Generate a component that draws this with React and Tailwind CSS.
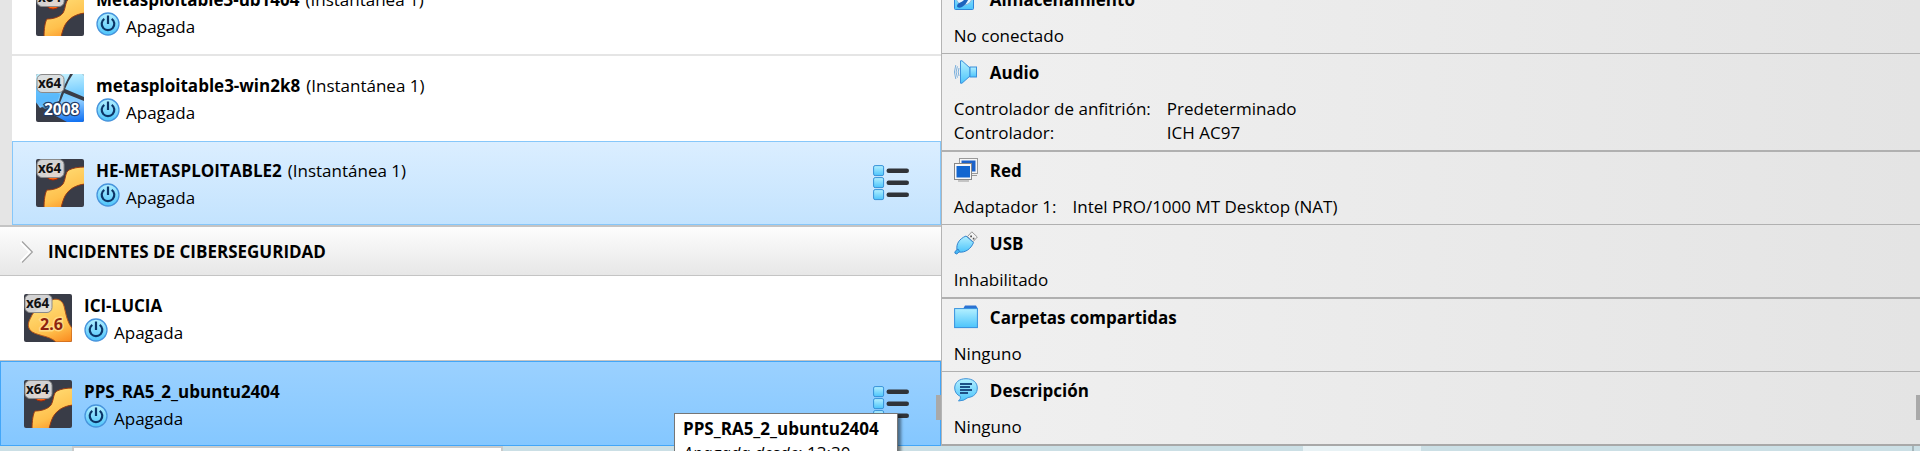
import { useId } from "react";

function Badge() {
  return (
    <g>
      <rect x="1" y="0.5" width="27" height="18" rx="5" fill="#dedede" fillOpacity="0.93" stroke="#8a8a8a" />
      <text x="2" y="14.3" fontSize="13.5" fontWeight="700" fill="#111" fontFamily="Noto Sans, sans-serif">x64</text>
    </g>
  );
}

function OsIcon({ kind }) {
  const id = useId();
  const g = `url(#${id})`;
  return (
    <svg className="size-12 shrink-0 rounded-xs" viewBox="0 0 48 48" role="img" aria-label={kind}>
      <defs>
        {kind === "windows" ? (
          <linearGradient id={id} gradientUnits="userSpaceOnUse" x1="28" y1="0" x2="34" y2="48">
            <stop offset="0" stopColor="#c0f0ff" />
            <stop offset="0.45" stopColor="#74cbff" />
            <stop offset="0.6" stopColor="#8ccbff" />
            <stop offset="1" stopColor="#1473f2" />
          </linearGradient>
        ) : (
          <linearGradient id={id} gradientUnits="userSpaceOnUse" x1="20" y1="6" x2="40" y2="54">
            <stop offset="0" stopColor="#ffe07a" />
            <stop offset="0.6" stopColor="#ffc04c" />
            <stop offset="1" stopColor="#f97f16" />
          </linearGradient>
        )}
      </defs>
      <rect width="48" height="48" fill="#393c47" />
      {kind === "ubuntu" && (
        <>
          <circle cx="17" cy="13" r="8" fill="#ff6a13" stroke="#a52a08" />
          <path d="M8 49C8 41 9 34 11 31C17 31 24 29 27 25C30 20 29 13 33 11C37 9 42 8 49 8V25C40 26 33 30 29 37C27 41 26 45 25 49Z" fill={g} stroke="#9a3b12" />
        </>
      )}
      {kind === "windows" && (
        <>
          <path d="M0 0H34C31 7 27 12 23 27C16 30 8 32 4 34L0 28Z" fill={g} />
          <path d="M37 0H48V23L29 15Q32 7 37 0Z" fill={g} />
          <path d="M28 19L48 27V48H31L18 41Q24 30 28 19Z" fill={g} />
          <path d="M0 12L24 20L20 31L9 35L0 29Z" fill="#46adfa" fillOpacity="0.6" />
          <text x="8" y="40.5" fontSize="15.5" fontWeight="700" fill="#fff" stroke="#243b63" strokeWidth="2.4" paintOrder="stroke" fontFamily="Noto Sans, sans-serif">2008</text>
        </>
      )}
      {kind === "linux" && (
        <>
          <path d="M24 9C29 3 38 4 40 12C42 20 43 28 48 34V48H32C25 41 11 42 6 36C2 30 6 26 8 21C12 14 18 14 24 9Z" fill={g} stroke="#b5561b" />
          <text x="16" y="36" fontSize="16" fontWeight="700" fill="#8d2410" stroke="#ffdb83" strokeWidth="3" paintOrder="stroke" fontFamily="Noto Sans, sans-serif">2.6</text>
        </>
      )}
      <Badge />
    </svg>
  );
}

function BlueGradient({ id }) {
  return (
    <defs>
      <linearGradient id={id} x1="0" y1="0" x2="0" y2="1">
        <stop offset="0" stopColor="#b4f0ff" />
        <stop offset="1" stopColor="#4cc4fb" />
      </linearGradient>
    </defs>
  );
}

function PowerIcon() {
  const id = useId();
  return (
    <svg className="size-6 shrink-0" viewBox="0 0 24 24" aria-hidden="true">
      <BlueGradient id={id} />
      <circle cx="12" cy="12" r="11" fill={`url(#${id})`} stroke="#4794dc" strokeWidth="1.3" />
      <path d="M8.3 6.8A6.3 6.3 0 1 0 15.7 6.8M12 3.5V12" fill="none" stroke="#0c3567" strokeWidth="2.2" />
    </svg>
  );
}

function ListIcon() {
  const id = useId();
  return (
    <svg className="h-9 w-9" viewBox="0 0 36 36" aria-hidden="true">
      <BlueGradient id={id} />
      {[0, 12, 24].map((y) => (
        <g key={y}>
          <rect x="0.6" y={y + 0.6} width="10" height="10" rx="1.5" fill={`url(#${id})`} stroke="#3691d8" />
          <rect x="13.5" y={y + 3.5} width="22.5" height="4.5" rx="2.2" fill="#303338" />
        </g>
      ))}
    </svg>
  );
}

function SectionIcon({ kind }) {
  const id = useId();
  const g = `url(#${id})`;
  return (
    <svg className="size-6 shrink-0" viewBox="0 0 24 24" aria-hidden="true">
      <BlueGradient id={id} />
      {kind === "disk" && (
        <>
          <rect x="0.5" y="0.5" width="19" height="22" rx="1" fill={g} stroke="#2f86da" />
          <circle cx="10" cy="10" r="8" fill="#e9f7ff" stroke="#8fb8d8" />
          <path d="M3 19C4 15 7 16 10 13L16 6C15 12 13 17 8 20C6 21 3 21 3 19Z" fill="#1d63bd" />
        </>
      )}
      {kind === "audio" && (
        <>
          <path d="M5 8Q3.4 12 5 16M3.4 6.3Q0.8 12 3.4 17.7M1.8 5Q-1 12 1.8 19" fill="none" stroke="#7db1dd" />
          <path d="M6.5 0.8H8L16 8V16L8 23.2H6.5Z" fill={g} stroke="#3a8fdb" />
          <rect x="16" y="7" width="6.5" height="10" fill={g} stroke="#3a8fdb" />
        </>
      )}
      {kind === "network" && (
        <>
          <rect x="5.5" y="0.5" width="18" height="15" fill="#f6f6f6" stroke="#999" />
          <rect x="7.5" y="2.5" width="14" height="11" fill="#1c62c9" />
          <path d="M9 17.5H23" stroke="#999" />
          <rect x="0.5" y="5.5" width="17" height="16" fill="#f8f8f8" stroke="#888" />
          <rect x="2.5" y="8" width="13.5" height="11.5" fill="#1266d0" />
          <path d="M4 23H15" stroke="#999" />
        </>
      )}
      {kind === "usb" && (
        <>
          <path d="M13.5 5.5L17.8 0.8L23.3 6L19 10.8Z" fill="#f3f3f3" stroke="#999" />
          <path d="M16.2 4.5H18V6.2H16.2ZM18.8 6.8H20.4V8.4H18.8Z" fill="#555" />
          <path d="M3 19C2 13 5 8 12 5L19.5 11.5C17 18 11 22 5 21Z" fill={g} stroke="#3284cf" />
          <path d="M4 18L1 20.5Q0 22.5 2.8 23L5.5 20.5Z" fill="#48b9f4" stroke="#3284cf" />
        </>
      )}
      {kind === "folder" && (
        <>
          <path d="M9 4L11 0.5H22L23.5 3V6H9Z" fill="#2b72d2" />
          <rect x="0.6" y="3.6" width="22.8" height="19" fill={g} stroke="#3591de" />
        </>
      )}
      {kind === "comment" && (
        <>
          <path d="M12 0.7C5 0.7 0.7 4.5 0.7 10C0.7 14 3 17 6.5 18.5Q7 21 4.5 23Q10 23 14 19.5C20 19 23.3 15 23.3 10C23.3 4.5 19 0.7 12 0.7Z" fill={g} stroke="#3e92d8" />
          <path d="M6 6H18M6 9H16M6 12H18M6 15H14" stroke="#1d4f86" strokeWidth="1.8" />
        </>
      )}
    </svg>
  );
}

function Machine({ os, name, snapshot, className, menu }) {
  return (
    <li className={`flex shrink-0 items-start gap-3 pr-8 pl-6 ${className}`}>
      <OsIcon kind={os} />
      <div className="min-w-0 grow">
        <p className="leading-6 whitespace-nowrap">
          <strong>{name}</strong>
          {snapshot && <span className="ml-[6px]">{snapshot}</span>}
        </p>
        <p className="flex items-start gap-[6px]">
          <PowerIcon />
          <span className="pt-[3px] leading-6">Apagada</span>
        </p>
      </div>
      {menu && (
        <button type="button" aria-label={`Herramientas de ${name}`} className="mt-[6px]">
          <ListIcon />
        </button>
      )}
    </li>
  );
}

function Section({ icon, title, rows, className }) {
  return (
    <section className={`pt-[6px] pb-[5px] pl-3 ${className}`}>
      <h2 className="flex h-6 items-start gap-3 font-bold">
        <SectionIcon kind={icon} />
        <span className="pt-px leading-6">{title}</span>
      </h2>
      <table className="mt-[13px]">
        <tbody>
          {rows.map(([label, value]) => (
            <tr key={label} className="leading-6">
              <td className="p-0 pr-4">{label}</td>
              {value && <td className="p-0">{value}</td>}
            </tr>
          ))}
        </tbody>
      </table>
    </section>
  );
}

export default function App() {
  return (
    <div className="relative overflow-hidden bg-[#cbdfe5] font-['Open_Sans',sans-serif] text-[17px] text-black">
      <main className="grid grid-cols-[49fr_51fr]">
        <div className="relative bg-white">
          <ul className="-mt-[30px] border-l-12 border-[#e5e5e5] bg-white">
            <Machine os="ubuntu" name="Metasploitable3-ub1404" snapshot="(Instantánea 1)" className="h-[84px] pt-[18px]" />
            <Machine os="windows" name="metasploitable3-win2k8" snapshot="(Instantánea 1)" className="h-[86px] border-t-2 border-[#e5e5e5] pt-[18px]" />
            <Machine os="ubuntu" name="HE-METASPLOITABLE2" snapshot="(Instantánea 1)" menu className="mt-px h-[84px] bg-linear-to-b from-[#dbeeff] to-[#c3e3fe] pt-[18px] inset-ring inset-ring-[#86c7fa]" />
          </ul>
          <h2 className="flex h-[51px] items-center gap-[14px] border-t-2 border-b border-t-[#c4c4c4] border-b-[#c4c4c4] bg-linear-to-b from-[#fdfdfd] to-[#e7e7e7] pt-0.5 pl-5 font-bold">
            <svg className="h-[22px] w-[14px]" viewBox="0 0 14 22" fill="none" aria-hidden="true">
              <path d="M1 1L10.5 11L1 21" stroke="#fff" strokeWidth="3" />
              <path d="M2 0.5L12.3 11L2 21.5" stroke="#a2a2a2" strokeWidth="1.3" />
            </svg>
            INCIDENTES DE CIBERSEGURIDAD
          </h2>
          <ul>
            <Machine os="linux" name="ICI-LUCIA" className="h-[84px] pt-[18px]" />
            <Machine os="ubuntu" name="PPS_RA5_2_ubuntu2404" menu className="h-[86px] border-t border-[#c4c4c4] bg-linear-to-b from-[#9bd1ff] to-[#84c7ff] pt-[19px] inset-ring inset-ring-[#43a6f8]" />
          </ul>
          <div className="absolute right-0 bottom-[26px] h-[25px] w-[5px] bg-[#a9a9a9]" />
        </div>
        <div className="relative border-l border-[#b4b4b4] bg-linear-to-r from-[#f0f0f0] to-[#e4e4e4]">
          <Section icon="disk" title="Almacenamiento" rows={[["No conectado"]]} className="-mt-[19px] border-b border-[#b0b0b0]" />
          <Section icon="audio" title="Audio" rows={[["Controlador de anfitrión:", "Predeterminado"], ["Controlador:", "ICH AC97"]]} className="border-b-2 border-[#b0b0b0]" />
          <Section icon="network" title="Red" rows={[["Adaptador 1:", "Intel PRO/1000 MT Desktop (NAT)"]]} className="border-b border-[#b0b0b0]" />
          <Section icon="usb" title="USB" rows={[["Inhabilitado"]]} className="border-b-2 border-[#b0b0b0]" />
          <Section icon="folder" title="Carpetas compartidas" rows={[["Ninguno"]]} className="border-b border-[#b0b0b0]" />
          <Section icon="comment" title="Descripción" rows={[["Ninguno"]]} className="border-b-2 border-[#a8a8a8]" />
          <div className="absolute right-0 bottom-[26px] h-[25px] w-1 bg-[#a9a9a9]" />
        </div>
      </main>
      <footer className="flex h-[5px] bg-[#cbdfe5]">
        <div className="ml-[72px] w-[431px] border-x-2 border-t-2 border-[#c8caca] bg-white" />
        <div className="ml-[800px] w-[118px] bg-[#e8f2f5]" />
        <div className="mr-[6px] ml-auto w-[2px] bg-[#a5b5ba]" />
      </footer>
      <div role="tooltip" className="absolute top-[413px] left-[674px] h-[60px] w-[224px] border border-[#767676] bg-white px-2 pt-[3px] leading-6 whitespace-nowrap shadow-[3px_3px_3px_#0007]">
        <strong className="block">PPS_RA5_2_ubuntu2404</strong>
        <em>Apagada desde</em>: 13:30
      </div>
    </div>
  );
}
